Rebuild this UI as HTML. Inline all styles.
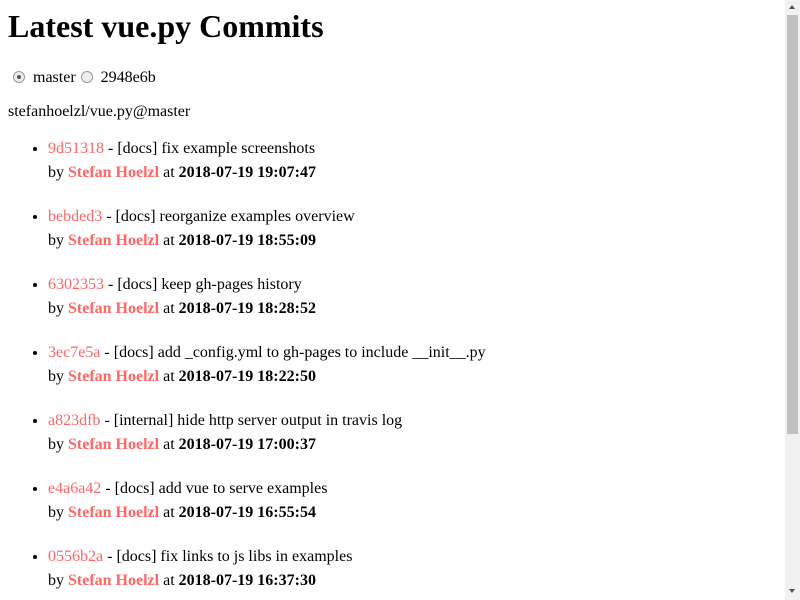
<!DOCTYPE html>
<html><head><style>
html,body{overflow:hidden;height:600px}
body{margin:8px;font-family:"Liberation Serif",serif;font-size:16px;color:#000;width:769px;height:584px}
h1{margin:0 0 21.44px;font-size:32px}
a{color:#f66;text-decoration:none}
ul{margin:16px 0;padding-left:40px}
li{line-height:1.5em;margin-bottom:20px}
.author,.date{font-weight:bold}
.rl{padding-top:3px}
.r{display:inline-block;width:12px;height:12px;border:1px solid #999;border-radius:50%;background:#eee;box-sizing:border-box;margin:0 8px 0 5px;position:relative;vertical-align:-1px}
.r.c::after{content:"";position:absolute;left:3px;top:3px;width:4px;height:4px;border-radius:50%;background:#555}
#sb{position:fixed;right:0;top:0;width:15px;height:600px;background:#f1f1f1}
#th{position:absolute;left:2px;top:15px;width:11px;height:419px;background:#c1c1c1}
.ar{position:absolute;left:4px;width:0;height:0;border-left:3.5px solid transparent;border-right:3.5px solid transparent}
</style></head><body>
<h1>Latest vue.py Commits</h1>
<div class="rl"><span class="r c"></span>master <span class="r" style="margin-left:1px"></span>2948e6b</div>
<p>stefanhoelzl/vue.py@master</p>
<ul>
<li><a href="#">9d51318</a> - [docs] fix example screenshots<br>by <span class="author"><a href="#">Stefan Hoelzl</a></span> at <span class="date">2018-07-19 19:07:47</span></li>
<li><a href="#">bebded3</a> - [docs] reorganize examples overview<br>by <span class="author"><a href="#">Stefan Hoelzl</a></span> at <span class="date">2018-07-19 18:55:09</span></li>
<li><a href="#">6302353</a> - [docs] keep gh-pages history<br>by <span class="author"><a href="#">Stefan Hoelzl</a></span> at <span class="date">2018-07-19 18:28:52</span></li>
<li><a href="#">3ec7e5a</a> - [docs] add _config.yml to gh-pages to include __init__.py<br>by <span class="author"><a href="#">Stefan Hoelzl</a></span> at <span class="date">2018-07-19 18:22:50</span></li>
<li><a href="#">a823dfb</a> - [internal] hide http server output in travis log<br>by <span class="author"><a href="#">Stefan Hoelzl</a></span> at <span class="date">2018-07-19 17:00:37</span></li>
<li><a href="#">e4a6a42</a> - [docs] add vue to serve examples<br>by <span class="author"><a href="#">Stefan Hoelzl</a></span> at <span class="date">2018-07-19 16:55:54</span></li>
<li><a href="#">0556b2a</a> - [docs] fix links to js libs in examples<br>by <span class="author"><a href="#">Stefan Hoelzl</a></span> at <span class="date">2018-07-19 16:37:30</span></li>
</ul>
<div id="sb"><div class="ar" style="top:5px;border-bottom:4px solid #505050"></div><div id="th"></div><div class="ar" style="top:589px;border-top:4px solid #505050"></div></div>
</body></html>
